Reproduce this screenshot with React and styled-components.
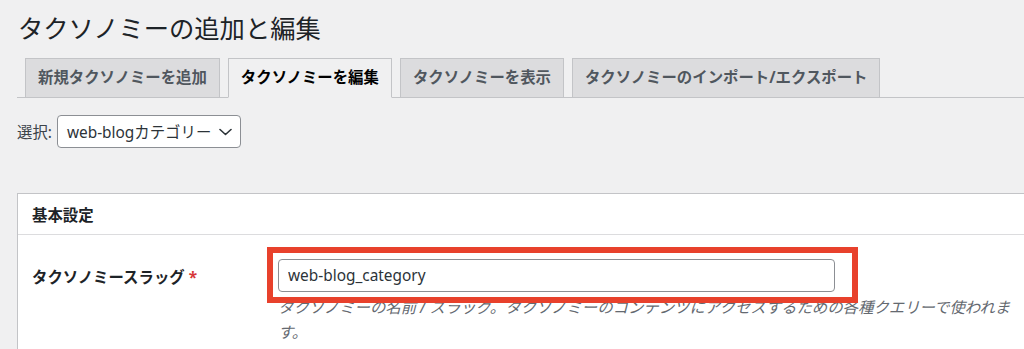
import React from "react";
import styled, { createGlobalStyle } from "styled-components";

const GlobalStyle = createGlobalStyle`
  html, body {
    margin: 0;
    padding: 0;
    background: #f0f0f1;
  }
  body {
    font-family: "Noto Sans", "Noto Sans CJK JP", sans-serif;
    color: #3c434a;
  }
`;

const PageStyle = styled.div`
  width: 1024px;
  height: 349px;
  overflow: hidden;
  padding-left: 17px;
  box-sizing: border-box;
`;

const TitleStyle = styled.h1`
  margin: 0;
  padding: 12px 0 0 1px;
  height: 32px;
  line-height: 32px;
  font-size: 25.3px;
  font-weight: 400;
  color: #1d2327;
`;

// タブ
const TabBarStyle = styled.nav`
  display: flex;
  margin-top: 14px;
  padding-left: 8px;
  border-bottom: 1px solid #c3c4c7;
`;
const TabStyle = styled.a`
  display: block;
  height: 38px;
  line-height: 38px;
  padding: 0 12px;
  margin-right: 8px;
  margin-bottom: -1px;
  border: 1px solid #c3c4c7;
  border-bottom-color: ${props => (props.active ? "#f0f0f1" : "#c3c4c7")};
  background-color: ${props => (props.active ? "#f0f0f1" : "#dcdcde")};
  color: ${props => (props.active ? "#000" : "#50575e")};
  font-size: 15.4px;
  font-weight: 700;
  white-space: nowrap;
`;

// 選択
const SelectRowStyle = styled.div`
  display: flex;
  align-items: center;
  margin-top: 17px;
  font-size: 15.4px;
`;
const SelectLabelStyle = styled.span`
  margin-right: 5px;
  color: #3c434a;
`;
const SelectBoxStyle = styled.div`
  display: flex;
  align-items: center;
  justify-content: space-between;
  width: 184px;
  height: 33px;
  box-sizing: border-box;
  padding: 0 8px 0 9px;
  border: 1px solid #8c8f94;
  border-radius: 4px;
  background-color: #fff;
  color: #2c3338;
  white-space: nowrap;
`;

// 基本設定
const PanelStyle = styled.section`
  margin-top: 45px;
  width: 1040px;
  height: 200px;
  background-color: #fff;
  border: 1px solid #c3c4c7;
`;
const PanelHeaderStyle = styled.h2`
  margin: 0;
  height: 40px;
  display: flex;
  align-items: center;
  padding-left: 14px;
  border-bottom: 1px solid #dcdcde;
  font-size: 15.4px;
  font-weight: 700;
  color: #1d2327;
`;
const FieldRowStyle = styled.div`
  display: grid;
  grid-template-columns: 246px 1fr;
  padding: 24px 0 0 14px;
`;
const FieldLabelStyle = styled.label`
  padding-top: 2px;
  line-height: 33px;
  font-size: 15.4px;
  font-weight: 700;
  color: #1d2327;
`;
const RequiredStyle = styled.span`
  color: #d63638;
`;
const FieldStyle = styled.div`
  position: relative;
`;
const InputStyle = styled.input`
  display: block;
  width: 557px;
  height: 33px;
  box-sizing: border-box;
  padding: 0 9px;
  border: 1px solid #8c8f94;
  border-radius: 4px;
  background-color: #fff;
  color: #2c3338;
  font-family: inherit;
  font-size: 15.4px;
  outline: none;
`;
const DescriptionStyle = styled.p`
  margin: 3px 0 0;
  width: 745px;
  line-height: 25px;
  font-size: 15.4px;
  font-style: italic;
  color: #646970;
`;
const HighlightStyle = styled.div`
  position: absolute;
  top: -12px;
  left: -11px;
  width: 591px;
  height: 56px;
  box-sizing: border-box;
  border: 6px solid #e8412c;
  pointer-events: none;
`;

const tabs = [
  "新規タクソノミーを追加",
  "タクソノミーを編集",
  "タクソノミーを表示",
  "タクソノミーのインポート/エクスポート",
];

const App = () => {
  return (
    <>
      <GlobalStyle />
      <PageStyle>
        <TitleStyle>タクソノミーの追加と編集</TitleStyle>

        <TabBarStyle>
          {tabs.map((tab, i) => (
            <TabStyle key={tab} active={i === 1 ? 1 : 0}>
              {tab}
            </TabStyle>
          ))}
        </TabBarStyle>

        <SelectRowStyle>
          <SelectLabelStyle>選択:</SelectLabelStyle>
          <SelectBoxStyle>
            <span>web-blogカテゴリー</span>
            <svg width="13" height="8" viewBox="0 0 13 8" fill="none">
              <path d="M1 1.5l5.5 5 5.5-5" stroke="#2c3338" strokeWidth="1.6" strokeLinecap="round" strokeLinejoin="round" />
            </svg>
          </SelectBoxStyle>
        </SelectRowStyle>

        <PanelStyle>
          <PanelHeaderStyle>基本設定</PanelHeaderStyle>
          <FieldRowStyle>
            <FieldLabelStyle>
              タクソノミースラッグ <RequiredStyle>*</RequiredStyle>
            </FieldLabelStyle>
            <FieldStyle>
              <InputStyle type="text" defaultValue="web-blog_category" />
              <DescriptionStyle>
                タクソノミーの名前 / スラッグ。タクソノミーのコンテンツにアクセスするための各種クエリーで使われます。
              </DescriptionStyle>
              <HighlightStyle />
            </FieldStyle>
          </FieldRowStyle>
        </PanelStyle>
      </PageStyle>
    </>
  );
};

export default App;
